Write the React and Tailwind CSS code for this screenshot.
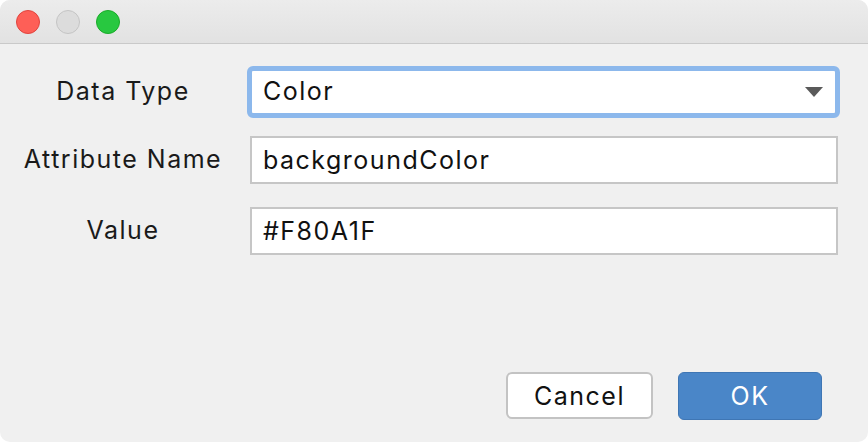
import React from 'react';

const FONT = { fontFamily: 'Inter, "Liberation Sans", Arial, sans-serif' };

function TrafficLights() {
  return (
    <div className="flex items-center gap-[16px] pl-[16px]">
      <span className="w-[24px] h-[24px] rounded-full bg-[#fe5f57] border border-[#e0443e]" />
      <span className="w-[24px] h-[24px] rounded-full bg-[#dcdcdc] border border-[#c4c4c4]" />
      <span className="w-[24px] h-[24px] rounded-full bg-[#28c840] border border-[#1aab29]" />
    </div>
  );
}

function Label({ children }) {
  return (
    <div className="w-[246px] text-center text-[25px] tracking-[1.5px] text-[#1a1a1a]">
      {children}
    </div>
  );
}

export default function App() {
  return (
    <div className="w-[868px] h-[442px] bg-white" style={FONT}>
      <div className="w-full h-full rounded-[10px] overflow-hidden bg-[#f0f0f0] flex flex-col">
        {/* title bar */}
        <div className="h-[44px] shrink-0 flex items-center bg-gradient-to-b from-[#ececec] to-[#e2e2e2] border-b border-[#c9c9c9]">
          <TrafficLights />
        </div>

        {/* form */}
        <div className="flex flex-col pt-[22px] pr-[30px]">
          <div className="flex items-center h-[52px]">
            <Label>Data Type</Label>
            <div className="flex-1 h-[52px] rounded-[6px] border-[5px] border-[#8cb8ec] ml-[1px] -mr-[2px]">
              <div className="h-full bg-white rounded-[2px] flex items-center justify-between pl-[11px] pr-[12px]">
                <span className="text-[25px] tracking-[1.5px] text-[#111]">Color</span>
                <svg width="18" height="10" viewBox="0 0 18 10">
                  <path d="M0 0 L18 0 L9 10 Z" fill="#5a5a5a" />
                </svg>
              </div>
            </div>
          </div>

          <div className="flex items-center h-[48px] mt-[18px]">
            <Label>Attribute Name</Label>
            <div className="flex-1 h-[48px] bg-white border-2 border-[#c6c6c6] flex items-center pl-[11px] pt-[2px] ml-[4px]">
              <span className="text-[25px] tracking-[1.5px] text-[#111]">backgroundColor</span>
            </div>
          </div>

          <div className="flex items-center h-[48px] mt-[23px]">
            <Label>Value</Label>
            <div className="flex-1 h-[48px] bg-white border-2 border-[#c6c6c6] flex items-center pl-[11px] pt-[2px] ml-[4px]">
              <span className="text-[25px] tracking-[1.5px] text-[#111]">#F80A1F</span>
            </div>
          </div>
        </div>

        {/* buttons */}
        <div className="mt-auto mb-[22px] flex justify-end gap-[25px] pr-[46px]">
          <button className="w-[147px] h-[47px] pt-[2px] rounded-[6px] bg-white border-2 border-[#c3c3c3] text-[25px] tracking-[1.5px] text-[#111]">
            Cancel
          </button>
          <button className="w-[144px] h-[48px] pt-[2px] rounded-[6px] bg-[#4a86c8] border border-[#3f76b4] text-[25px] tracking-[1.5px] text-white">
            OK
          </button>
        </div>
      </div>
    </div>
  );
}
